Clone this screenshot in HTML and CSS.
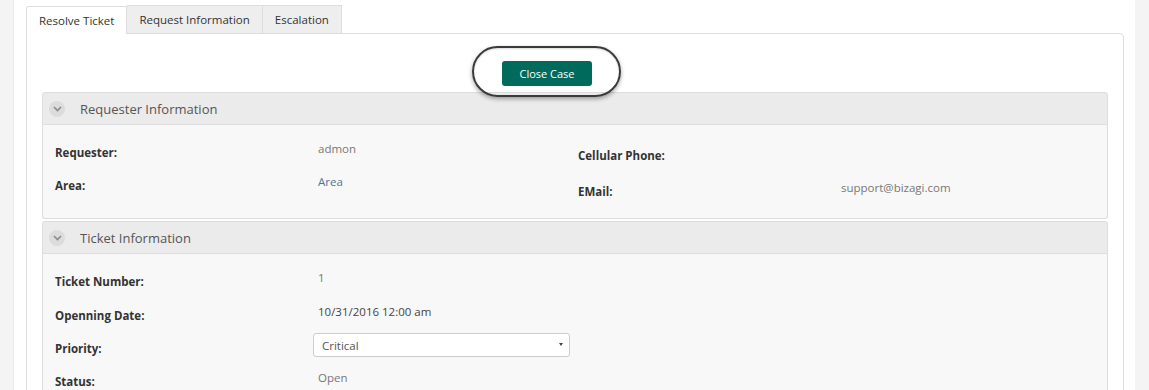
FILE: index.html
```html
<!DOCTYPE html>
<html lang="en">
<head>
    <meta charset="UTF-8">
    <title>Resolve Ticket</title>
    <link rel="stylesheet" href="styles.css">
</head>
<body>
    <div class="page">
        <div class="tabs">
            <div class="tab active">Resolve Ticket</div>
            <div class="tab">Request Information</div>
            <div class="tab">Escalation</div>
        </div>

        <div class="panel">
            <div class="actions">
                <div class="btn-wrap">
                    <button class="btn-close">Close Case</button>
                    <span class="highlight"></span>
                </div>
            </div>

            <div class="group">
                <div class="group-header">
                    <span class="toggle">
                        <svg width="9" height="6" viewBox="0 0 9 6"><path d="M1 1l3.5 3.5L8 1" fill="none" stroke="#8a8a8a" stroke-width="1.6"/></svg>
                    </span>
                    Requester Information
                </div>
                <div class="group-body cols">
                    <div class="col">
                        <div class="row"><span class="label">Requester:</span><span class="value">admon</span></div>
                        <div class="row"><span class="label">Area:</span><span class="value link">Area</span></div>
                    </div>
                    <div class="col col-right">
                        <div class="row tall"><span class="label">Cellular Phone:</span><span class="value"></span></div>
                        <div class="row tall"><span class="label">EMail:</span><span class="value">support@bizagi.com</span></div>
                    </div>
                </div>
            </div>

            <div class="group">
                <div class="group-header">
                    <span class="toggle">
                        <svg width="9" height="6" viewBox="0 0 9 6"><path d="M1 1l3.5 3.5L8 1" fill="none" stroke="#8a8a8a" stroke-width="1.6"/></svg>
                    </span>
                    Ticket Information
                </div>
                <div class="group-body">
                    <div class="col">
                        <div class="row first"><span class="label">Ticket Number:</span><span class="value">1</span></div>
                        <div class="row"><span class="label">Openning Date:</span><span class="value dark">10/31/2016 12:00 am</span></div>
                        <div class="row"><span class="label">Priority:</span>
                            <div class="select">Critical<span class="caret"></span></div>
                        </div>
                        <div class="row"><span class="label">Status:</span><span class="value">Open</span></div>
                    </div>
                </div>
            </div>
        </div>
    </div>
</body>
</html>
```

FILE: styles.css
```css
body {
    margin: 0;
    background-color: #f4f4f4;
    font-family: 'Open Sans', sans-serif;
    font-size: 12px;
    color: #333;
    overflow: hidden;
}

.page {
    background-color: #fff;
    margin: 0 14px 0 13px;
    padding: 5px 11px 0 12px;
    height: 400px;
    border-left: 1px solid #ececec;
}

.tabs {
    display: flex;
    height: 28px;
}

.tab {
    padding: 0 12px;
    line-height: 27px;
    font-size: 11.5px;
    background-color: #eee;
    border: 1px solid #ddd;
    border-bottom: none;
    border-left: none;
    color: #333;
}

.tab.active {
    background-color: #fff;
    border-left: 1px solid #ddd;
    border-radius: 3px 0 0 0;
    position: relative;
    top: 1px;
}

.panel {
    border: 1px solid #ddd;
    border-radius: 0 4px 0 0;
    padding: 0 15px;
    height: 400px;
}

.actions {
    display: flex;
    justify-content: center;
    padding: 27px 0 6px;
}

.btn-wrap {
    position: relative;
    margin-right: 56px;
}

.btn-close {
    background-color: #006b5c;
    color: #fff;
    border: none;
    border-radius: 3px;
    width: 90px;
    height: 25px;
    font-family: 'Open Sans', sans-serif;
    font-size: 11px;
    padding: 0;
}

.highlight {
    position: absolute;
    top: -15px;
    bottom: -11px;
    left: -30px;
    right: -29px;
    border: 2.5px solid #3a3a3a;
    border-radius: 30px;
    box-shadow: 0 2px 4px rgba(0, 0, 0, 0.35), inset 0 1px 2px rgba(0, 0, 0, 0.15);
    z-index: 2;
}

.group {
    margin-bottom: 2px;
}

.group-header {
    display: flex;
    align-items: center;
    height: 31px;
    background-color: #ebebeb;
    border: 1px solid #ddd;
    border-radius: 3px 3px 0 0;
    padding-left: 7px;
    font-size: 13px;
    color: #555;
}

.toggle {
    display: flex;
    align-items: center;
    justify-content: center;
    width: 16px;
    height: 16px;
    border-radius: 50%;
    background-color: #dcdcdc;
    margin: 0 15px 0 -1px;
}

.group-body {
    background-color: #f8f8f8;
    border: 1px solid #ddd;
    border-top: none;
    border-radius: 0 0 3px 3px;
    padding: 16px 0 2px 12px;
}

.cols {
    display: flex;
}

.col {
    width: 523px;
}

.col-right {
    padding-top: 3px;
}

.row {
    display: flex;
    height: 33px;
}

.row.tall {
    height: 36px;
}

.row.first {
    height: 34px;
}

.label {
    width: 263px;
    font-weight: bold;
    font-size: 11.5px;
    padding-top: 4px;
    color: #333;
}

.value {
    color: #777;
    font-size: 11.5px;
}

.value.link {
    color: #4f7594;
}

.value.dark {
    color: #444;
}

.select {
    position: relative;
    box-sizing: border-box;
    width: 257px;
    height: 24px;
    margin: -4px 0 0 -5px;
    padding-left: 8px;
    line-height: 23px;
    background-color: #fff;
    border: 1px solid #ccc;
    border-radius: 3px;
    color: #555;
    font-size: 11.5px;
}

.caret {
    position: absolute;
    right: 6px;
    top: 9px;
    border-left: 2px solid transparent;
    border-right: 2px solid transparent;
    border-top: 3px solid #444;
}
```
